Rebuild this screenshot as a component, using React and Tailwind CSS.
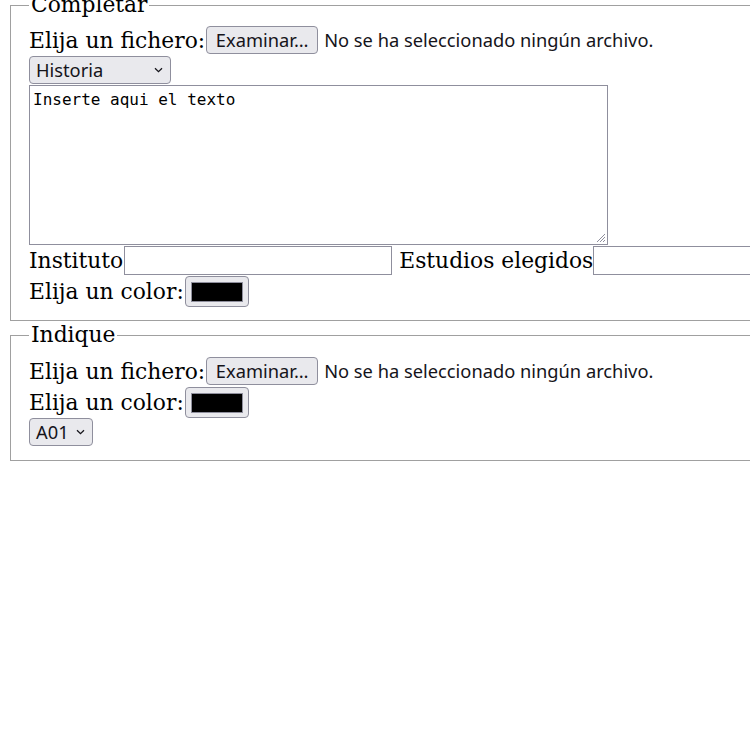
import React from "react";

const serif = "font-['DejaVu_Serif',serif] text-[21.8px] leading-[25px] text-black whitespace-nowrap";
const ui = "font-['Noto_Sans',sans-serif] text-[18.3px] leading-[22px] text-[#15141a] whitespace-nowrap";

function Chevron() {
  return (
    <svg width="9" height="6" viewBox="0 0 9 6" className="shrink-0">
      <path d="M1 1.2 L4.5 4.6 L8 1.2" fill="none" stroke="#15141a" strokeWidth="1.3" />
    </svg>
  );
}

function FileRow() {
  return (
    <div className="flex items-center h-[28px]">
      <span className={serif}>Elija un fichero:</span>
      <div className={`${ui} w-[112px] h-[28px] ml-[1px] flex items-center justify-center bg-[#e9e9ed] border border-[#8f8f9d] rounded-[4px]`}>
        Examinar…
      </div>
      <span className={`${ui} ml-[6px]`}>No se ha seleccionado ningún archivo.</span>
    </div>
  );
}

function ColorRow({ className = "" }) {
  return (
    <div className={`flex items-center h-[31px] ${className}`}>
      <span className={serif}>Elija un color:</span>
      <div className="w-[64px] h-[31px] ml-[1px] flex items-center justify-center bg-[#e9e9ed] border border-[#8f8f9d] rounded-[4px]">
        <div className="w-[52px] h-[20px] bg-black border border-[#8f8f9d]" />
      </div>
    </div>
  );
}

function Select({ label, width, className = "" }) {
  return (
    <div
      className={`${ui} ${width} h-[28px] flex items-center justify-between pl-[6px] pr-[7px] bg-[#e9e9ed] border border-[#8f8f9d] rounded-[4px] ${className}`}
    >
      <span>{label}</span>
      <Chevron />
    </div>
  );
}

function Legend({ children }) {
  return (
    <span className={`${serif} absolute left-[18px] top-[-14px] bg-white px-[2px]`}>{children}</span>
  );
}

export default function App() {
  return (
    <div className="w-[750px] h-[750px] overflow-hidden bg-white">
      <div className="pl-[10px] pt-[5px]">
        <div className="relative w-[900px] border border-[#a0a0a0] pl-[18px] pt-[20px] pb-[13px]">
          <Legend>Completar</Legend>
          <FileRow />
          <Select label="Historia" width="w-[142px]" className="mt-[2px]" />
          <div className="relative mt-[1px] w-[579px] h-[160px] border border-[#8f8f9d] bg-white px-[3px] pt-[1px]">
            <span className="font-['DejaVu_Sans_Mono',monospace] text-[16px] leading-[19px] text-black whitespace-pre">
              Inserte aqui el texto
            </span>
            <svg width="11" height="11" viewBox="0 0 11 11" className="absolute right-[1px] bottom-[1px]">
              <path d="M10 2 L2 10 M10 5 L5 10 M10 8 L8 10" stroke="#8f8f9d" strokeWidth="1" />
            </svg>
          </div>
          <div className="flex items-center h-[29px] mt-[1px]">
            <span className={serif}>Instituto</span>
            <div className="w-[268px] h-[29px] ml-[1px] border border-[#8f8f9d] bg-white" />
            <span className={`${serif} ml-[7px]`}>Estudios elegidos</span>
            <div className="w-[268px] h-[29px] border border-[#8f8f9d] bg-white" />
          </div>
          <ColorRow className="mt-[1px]" />
        </div>

        <div className="relative w-[900px] mt-[14px] border border-[#a0a0a0] pl-[18px] pt-[21px] pb-[14px]">
          <Legend>Indique</Legend>
          <FileRow />
          <ColorRow className="mt-[2px]" />
          <Select label="A01" width="w-[64px]" />
        </div>
      </div>
    </div>
  );
}
